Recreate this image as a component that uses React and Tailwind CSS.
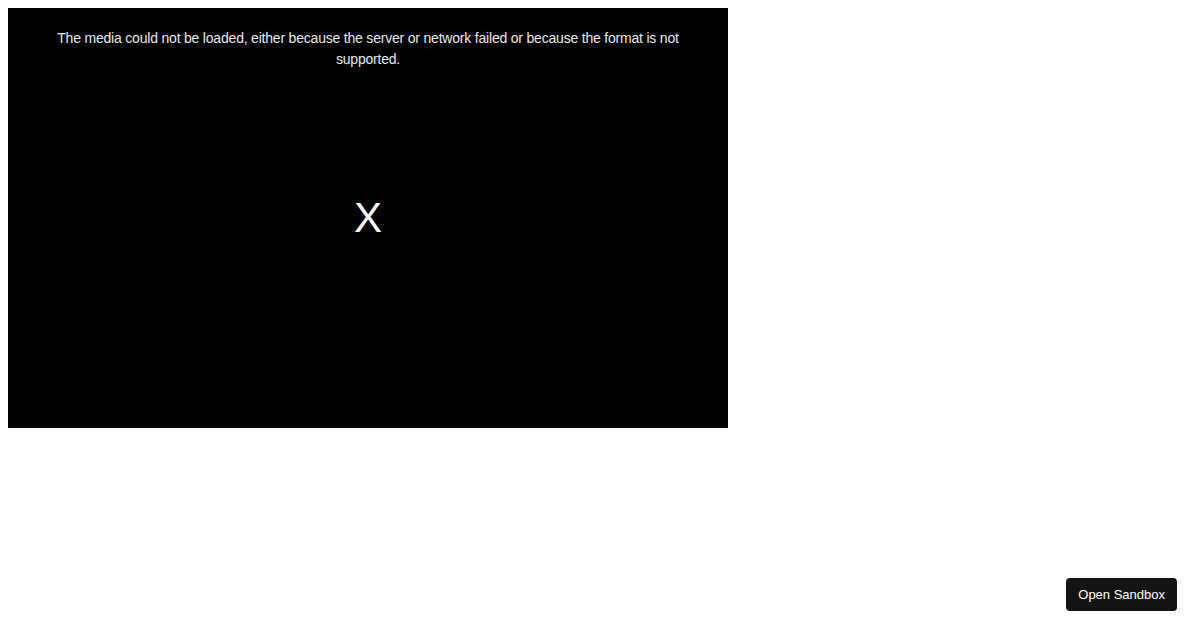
import React from "react";

export default function App() {
  return (
    <div className="relative h-[630px] w-[1200px] bg-white p-2 font-['Liberation_Sans',Arial,sans-serif]">
      <div className="flex h-[420px] w-[720px] flex-col items-center bg-black">
        <p className="mt-[20px] w-[660px] text-center text-[14px] leading-[21px] tracking-[-0.2px] text-[#e8e8e8]">
          The media could not be loaded, either because the server or network failed or because the format is not supported.
        </p>
        <div className="mt-[127px] text-[42px] leading-none text-white">X</div>
      </div>
      <button className="absolute bottom-[19px] right-[23px] flex h-[33px] items-center rounded-[4px] bg-[#141414] px-[12px] text-[13px] text-white">
        Open Sandbox
      </button>
    </div>
  );
}
